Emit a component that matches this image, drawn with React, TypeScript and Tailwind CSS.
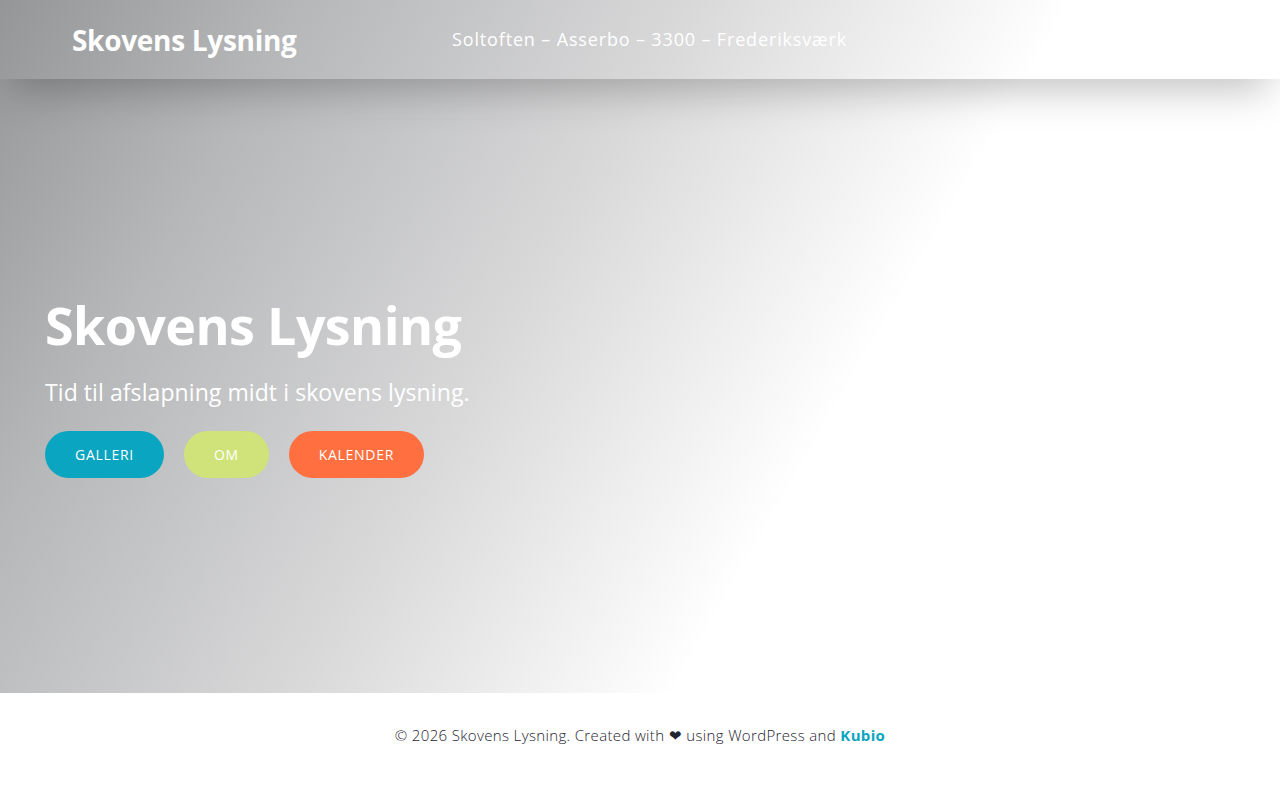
import React from 'react';

const font = { fontFamily: '"Open Sans", "Noto Sans", sans-serif' };

const buttons = [
  { label: 'GALLERI', className: 'bg-[#0aa5c0]' },
  { label: 'OM', className: 'bg-[#d0e37b]' },
  { label: 'KALENDER', className: 'bg-[#ff6f40]' },
];

export default function App() {
  return (
    <div style={font} className="w-full min-h-[800px] bg-white">
      {/* hero + header share one gradient */}
      <div className="h-[693px] flex flex-col bg-[linear-gradient(120deg,#959698_0%,#b6b7b9_18%,#d8d8d9_41%,#ffffff_64%)]">
        <header className="h-[79px] shrink-0 flex items-center shadow-[0_22px_40px_-12px_rgba(0,0,0,0.25)] relative z-10">
          <div className="w-[224px] ml-[72px] text-white text-[28px] font-bold tracking-[-0.3px] leading-none whitespace-nowrap">
            Skovens Lysning
          </div>
          <div className="ml-[156px] text-white text-[18px] tracking-[0.85px] font-normal whitespace-nowrap">
            Soltoften – Asserbo – 3300 – Frederiksværk
          </div>
          <nav className="ml-auto mr-[170px] text-white text-[18px] tracking-[0.85px] whitespace-nowrap">Kontakt</nav>
        </header>

        <main className="flex-1 flex flex-col justify-center pl-[45px]">
          <h1 className="text-white text-[52px] font-bold leading-[1.2] tracking-[-0.6px]">Skovens Lysning</h1>
          <p className="mt-[22px] text-white text-[23px] font-medium leading-[1.25] tracking-[0.08px]">
            Tid til afslapning midt i skovens lysning.
          </p>
          <div className="mt-[24px] flex gap-5">
            {buttons.map((b) => (
              <button
                key={b.label}
                className={`${b.className} h-[47px] px-[30px] rounded-full text-white text-[14px] tracking-[0.7px] cursor-pointer`}
              >
                {b.label}
              </button>
            ))}
          </div>
        </main>
      </div>

      <footer className="h-[107px] flex justify-center pt-[31px]">
        <p className="text-[15px] font-light tracking-[0.35px] text-[#1f2430]">
          © 2026 Skovens Lysning. Created with ❤ using WordPress and{' '}
          <span className="font-bold text-[#0aa5c0]">Kubio</span>
        </p>
      </footer>
    </div>
  );
}
